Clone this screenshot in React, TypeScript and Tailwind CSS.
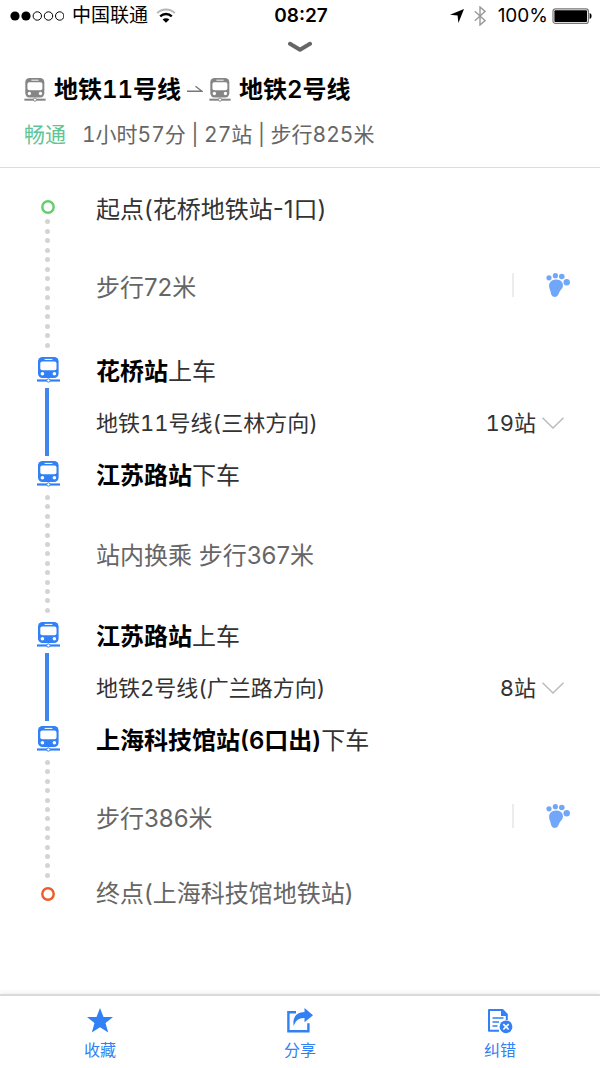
import React from 'react';
import clsx from 'clsx';

interface IconProps {
  className?: string;
}

const TrainIcon: React.FC<IconProps> = ({ className }) => (
  <svg className={className} viewBox="0 0 23 26" fill="none" aria-hidden="true">
    <rect x="1" y="0" width="20.6" height="21" rx="4.5" fill="currentColor" />
    <path d="M8 2.4h7" stroke="#fff" strokeWidth="1" strokeLinecap="round" />
    <rect x="3.3" y="4.6" width="16.2" height="8.6" rx="2" fill="#fff" />
    <circle cx="5.4" cy="16.8" r="1.8" fill="#fff" />
    <circle cx="17.4" cy="16.8" r="1.8" fill="#fff" />
    <path d="M0 23.5h23" stroke="currentColor" strokeWidth="2.2" />
    <circle cx="11.4" cy="23.5" r="1.7" fill="#fff" stroke="currentColor" strokeWidth="1" />
  </svg>
);

const FootIcon: React.FC<IconProps> = ({ className }) => (
  <svg className={className} viewBox="0 0 24 24" fill="currentColor" aria-hidden="true">
    <path d="M9.8 6.6c4.400-.3 7.400 2.600 7.200 6.200-.2 2.800-2.800 4.400-3.800 6.800-.8 2.200-1.600 4.300-4.400 4.300-3.200 0-3.700-2.700-4.200-5.100-.5-2.400-1.700-4-1.500-6.400C3.300 9 6 6.800 9.800 6.600z" />
    <circle cx="3" cy="4.800" r="2.600" />
    <circle cx="9.400" cy="2.700" r="2.600" />
    <circle cx="15.800" cy="3.500" r="2.800" />
    <circle cx="20.700" cy="9.200" r="3.200" />
  </svg>
);

const WifiIcon: React.FC<IconProps> = ({ className }) => (
  <svg className={className} viewBox="0 0 20 15" fill="none" aria-hidden="true">
    <path d="M1.200 4.600C6-.2 14-.2 18.800 4.600" stroke="#b5b5b5" strokeWidth="2" />
    <path d="M4.200 7.800c3.200-3.100 8.400-3.100 11.600 0" stroke="#000" strokeWidth="2.300" />
    <path d="M10 14.200 6.600 10.900c1.900-1.700 4.900-1.700 6.800 0z" fill="#000" />
  </svg>
);

const StatusBar = () => (
  <div className="grid grid-cols-3 items-center h-8 pl-2.5 pr-2">
    <div className="flex items-center">
      <svg className="w-[54px] h-3" viewBox="0 0 54 12" aria-hidden="true">
        <circle cx="5" cy="6" r="4.600" />
        <circle cx="16" cy="6" r="4.600" />
        <g fill="none" stroke="#000" strokeWidth="1">
          <circle cx="27.300" cy="6" r="4.200" />
          <circle cx="38.500" cy="6" r="4.200" />
          <circle cx="49.700" cy="6" r="4.200" />
        </g>
      </svg>
      <span className="ml-2 text-[19px] leading-6 whitespace-nowrap">中国联通</span>
      <WifiIcon className="ml-2 w-5 h-4 shrink-0" />
    </div>
    <span className="text-center text-[19px] leading-6 font-semibold">08:27</span>
    <div className="flex items-center justify-end">
      <svg className="w-3.5 h-3.5" viewBox="0 0 14 14" aria-hidden="true">
        <path d="M14 0 8.400 14 7.600 6.600 0 5.800z" />
      </svg>
      <svg className="ml-2.5 w-3 h-5" viewBox="0 0 12 20" fill="none" stroke="#999" strokeWidth="1.400" aria-hidden="true">
        <path d="M.8 5.200 11 14.600 6 19V1l5 4.400L.8 14.800" />
      </svg>
      <span className="ml-3 text-[19px] leading-6">100%</span>
      <svg className="ml-1 w-10 h-4" viewBox="0 0 40 16" fill="none" aria-hidden="true">
        <rect x="1" y=".8" width="35.400" height="14.600" rx="2.500" stroke="#777" strokeWidth="1.200" />
        <rect x="2.400" y="2.200" width="32.600" height="11.800" rx="1" fill="#000" />
        <path d="M37.600 5c2.600.6 2.600 5.400 0 6z" fill="#000" />
      </svg>
    </div>
  </div>
);

const Header = () => (
  <header className="border-b border-[#dcdcdc]">
    <StatusBar />
    <div className="flex justify-center">
      <button type="button" aria-label="收起" className="h-8">
        <svg className="w-6 h-8" viewBox="0 0 24 32" fill="none" aria-hidden="true">
          <path d="M2 11.800l10 6 10-6" stroke="#666" strokeWidth="4" strokeLinecap="round" strokeLinejoin="round" />
        </svg>
      </button>
    </div>
    <div className="px-6 pt-2.5 pb-[18px] tabular-nums">
      <h1 className="flex items-center text-2xl leading-8 font-semibold">
        <TrainIcon className="w-[22px] h-6 text-[#858585]" />
        <span className="ml-2">地铁11号线</span>
        <svg className="mx-1.5 w-4 h-3" viewBox="0 0 16 12" fill="none" stroke="#777" strokeWidth="1.400" aria-label="到">
          <path d="M0 7.300h15L8.500 2.300" />
        </svg>
        <TrainIcon className="w-[22px] h-6 text-[#858585]" />
        <span className="ml-2">地铁2号线</span>
      </h1>
      <p className="mt-[15px] flex gap-4 text-[21px] leading-7 text-[#666]">
        <span className="text-[#5fc594]">畅通</span>
        <span>1小时57分 | 27站 | 步行825米</span>
      </p>
    </div>
  </header>
);

const Rail: React.FC<{ children: React.ReactNode; className?: string }> = ({ children, className }) => (
  <div className={clsx('w-24 shrink-0 flex', className)}>{children}</div>
);

const EndPoint: React.FC<{ label: string; kind: 'start' | 'end' }> = ({ label, kind }) => (
  <li className="flex">
    <Rail className={clsx('pl-[41px]', kind === 'start' ? 'pt-0.5' : 'pt-[5px]')}>
      <svg
        className={clsx('size-3.5', kind === 'start' ? 'text-[#62ce6a]' : 'text-[#ee5a28]')}
        viewBox="0 0 14 14"
        fill="none"
        aria-hidden="true"
      >
        <circle cx="7" cy="7" r="5.700" stroke="currentColor" strokeWidth="2.400" />
      </svg>
    </Rail>
    <span className={clsx('text-2xl leading-6', kind === 'start' ? 'text-[#333]' : 'text-[#666]')}>{label}</span>
  </li>
);

const Station: React.FC<{ name: string; action: string }> = ({ name, action }) => (
  <li className="flex">
    <Rail className="pl-[37px] pt-px">
      <TrainIcon className="w-[23px] h-[26px] text-[#3280f5]" />
    </Rail>
    <span className="text-2xl leading-8 text-[#333]">
      <strong className="font-semibold text-black">{name}</strong>
      {action}
    </span>
  </li>
);

interface WalkProps {
  label: string;
  dots: number;
  className: string;
  railClassName: string;
  hasMap?: boolean;
}

const Walk: React.FC<WalkProps> = ({ label, dots, className, railClassName, hasMap }) => (
  <li className={clsx('flex', className)}>
    <Rail className="pl-[45px]">
      <span className={clsx('flex flex-col justify-between', railClassName)}>
        {Array.from({ length: dots }, (_, i) => (
          <span key={i} className="size-[5px] rounded-full bg-[#d4d4d6]" />
        ))}
      </span>
    </Rail>
    <div className="flex-1 flex items-center justify-between pb-0.5">
      <span className="text-2xl leading-8 text-[#666]">{label}</span>
      {hasMap && (
        <button type="button" aria-label="步行导航" className="mr-[30px] mb-1.5 pl-8 border-l-2 border-[#ececec]">
          <FootIcon className="size-6 text-[#71a7f9]" />
        </button>
      )}
    </div>
  </li>
);

const Ride: React.FC<{ line: string; stops: string }> = ({ line, stops }) => (
  <li className="flex h-[72px]">
    <Rail className="pl-[45px] pb-1">
      <span className="w-1 bg-[#3f86ee]" />
    </Rail>
    <button
      type="button"
      className="flex-1 flex items-center justify-between pr-9 pb-0.5 text-[22px] leading-8 text-[#333] tabular-nums"
    >
      <span>{line}</span>
      <span className="flex items-center gap-1.5">
        {stops}
        <svg className="w-[22px] h-3" viewBox="0 0 22 12" fill="none" stroke="#bbb" strokeWidth="1.500" aria-hidden="true">
          <path d="M.5.8 11 11 21.500.8" />
        </svg>
      </span>
    </button>
  </li>
);

const StarIcon = () => (
  <svg className="size-[26px]" viewBox="0 0 26 26" fill="currentColor" aria-hidden="true">
    <path d="M13 0l3.500 9h9.500l-7.500 6 2.700 9.500L13 19.300l-8.200 5.200L7.500 15 0 9h9.500z" />
  </svg>
);

const ShareIcon = () => (
  <svg className="size-[26px]" viewBox="0 0 26 26" fill="none" aria-hidden="true">
    <path d="M9 4.200H1.400v19h20v-8" stroke="currentColor" strokeWidth="2.400" />
    <path d="M17.500 0 26 7.300l-8.500 7v-4.300c-6-.2-8.800 2.500-10.800 8C5.300 10.500 8.500 4.300 17.500 4z" fill="currentColor" />
  </svg>
);

const ReportIcon = () => (
  <svg className="size-[26px]" viewBox="0 0 26 26" fill="none" aria-hidden="true">
    <path d="M12 22.800H2V2h13.500l4.300 4.500V12" stroke="currentColor" strokeWidth="2" strokeLinejoin="round" />
    <path d="M14 1.500 20.500 8H14z" fill="currentColor" />
    <path d="M5.500 10h11M5.500 14h6.500M5.500 18h5" stroke="currentColor" strokeWidth="1.500" />
    <circle cx="19" cy="18.800" r="6.400" fill="currentColor" />
    <path d="M16.300 16.100l5.400 5.400m0-5.400-5.400 5.400" stroke="#fff" strokeWidth="1.700" />
  </svg>
);

const TABS = [
  { label: '收藏', icon: <StarIcon /> },
  { label: '分享', icon: <ShareIcon /> },
  { label: '纠错', icon: <ReportIcon /> },
];

export default function App() {
  return (
    <div className="min-h-screen flex flex-col bg-white text-black font-[Inter,'Noto_Sans_CJK_SC',sans-serif]">
      <Header />

      <main className="flex-1 pt-[30px] pb-10">
        <ol>
          <EndPoint kind="start" label="起点(花桥地铁站-1口)" />
          <Walk label="步行72米" dots={14} className="h-[134px]" railClassName="-mt-[3px] mb-2" hasMap />
          <Station name="花桥站" action="上车" />
          <Ride line="地铁11号线(三林方向)" stops="19站" />
          <Station name="江苏路站" action="下车" />
          <Walk label="站内换乘 步行367米" dots={13} className="h-[129px]" railClassName="mt-[3px] mb-2" />
          <Station name="江苏路站" action="上车" />
          <Ride line="地铁2号线(广兰路方向)" stops="8站" />
          <Station name="上海科技馆站(6口出)" action="下车" />
          <Walk label="步行386米" dots={13} className="h-[125px]" railClassName="mt-[3px] mb-1" hasMap />
          <EndPoint kind="end" label="终点(上海科技馆地铁站)" />
        </ol>
      </main>

      <nav className="grid grid-cols-3 border-t-2 border-[#dadade] shadow-[0_-2px_4px_rgba(0,0,0,0.06)]">
        {TABS.map((tab) => (
          <button key={tab.label} type="button" className="flex flex-col items-center gap-1 pt-3 pb-1.5 text-[#3280f5]">
            {tab.icon}
            <span className="text-base leading-6">{tab.label}</span>
          </button>
        ))}
      </nav>
    </div>
  );
}
